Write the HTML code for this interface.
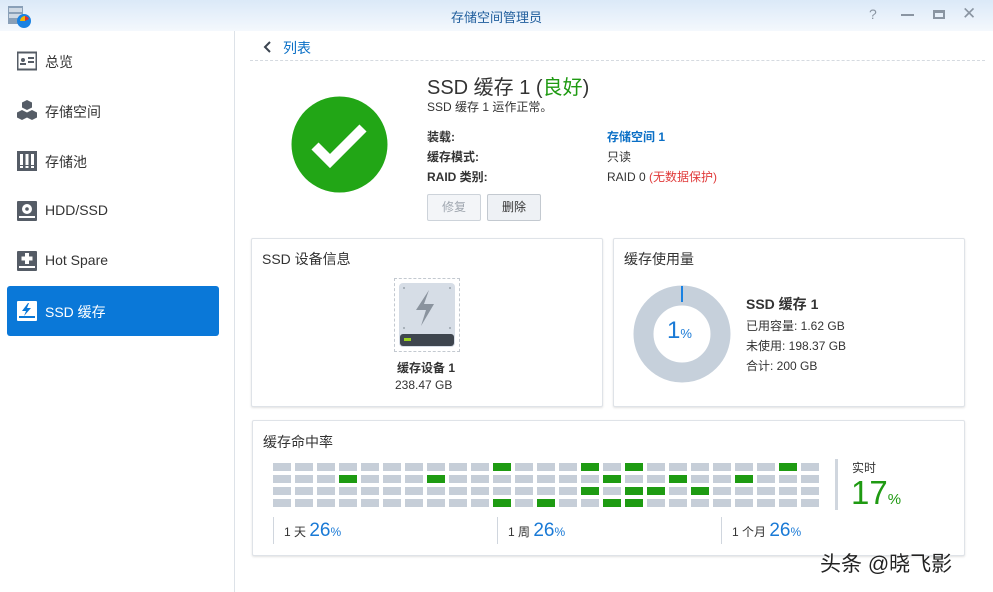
<!DOCTYPE html>
<html><head><meta charset="utf-8"><style>
*{margin:0;padding:0;box-sizing:border-box}
body{width:993px;height:592px;overflow:hidden;background:#fff;font-family:"Liberation Sans","Noto Sans CJK SC",sans-serif;color:#333;position:relative}
.a{position:absolute;white-space:nowrap}
.title{left:0;top:0;width:993px;height:31px;background:linear-gradient(#dbe9f8,#f4f8fd)}
.nav{left:16px;font-size:14px;color:#333}
.ico{position:absolute;left:17px;width:20px;height:20px}
.panel{position:absolute;background:#fff;border:1px solid #dfe3e8;box-shadow:0 1px 2px rgba(0,0,0,.12);border-radius:2px}
.cell{position:absolute;width:18px;height:8px;background:#c6ced8}
.g{background:#1e9b12}
.lbl{font-size:12px;font-weight:bold;color:#333}
</style></head><body>
<div class="a title"></div>
<svg class="a" style="left:7px;top:4px" width="24" height="24" viewBox="0 0 24 24"><rect x="1" y="2" width="15" height="18" fill="#8aa0b8"/><rect x="2" y="4" width="13" height="4" fill="#cfd9e4"/><rect x="2" y="10" width="13" height="4" fill="#cfd9e4"/><circle cx="17" cy="17" r="7" fill="#1a82e2"/><path d="M13 17a5 5 0 0 1 5-5v5z" fill="#f7b500"/><path d="M18 12a5 5 0 0 1 4 3l-4 2z" fill="#e0322b"/></svg>
<div class="a" style="left:0;width:993px;top:7px;text-align:center;font-size:13px;color:#1f5d9c">存储空间管理员</div>
<div class="a" style="left:869px;top:6px;font-size:14px;color:#8a95a2">?</div>
<div class="a" style="left:901px;top:14px;width:13px;height:2px;background:#8a95a2"></div>
<div class="a" style="left:933px;top:10px;width:12px;height:9px;border:2px solid #8a95a2;border-top-width:3px"></div>
<div class="a" style="left:962px;top:4px;font-size:17px;color:#8a95a2">✕</div>

<div class="a" style="left:234px;top:31px;width:1px;height:561px;background:#dde2e8"></div>
<svg class="ico" style="top:51px" viewBox="0 0 20 20"><rect x="0.5" y="1.5" width="19" height="17" fill="none" stroke="#555c66" stroke-width="2"/><circle cx="6" cy="9" r="2" fill="#555c66"/><rect x="3" y="12" width="6" height="2" fill="#555c66"/><rect x="11" y="6" width="6" height="2" fill="#555c66"/><rect x="11" y="10" width="6" height="2" fill="#555c66"/></svg>
<div class="a nav" style="left:45px;top:52px">总览</div>
<svg class="ico" style="top:100px" viewBox="0 0 20 20"><path d="M10 0l5 2.5v5l-5 2.5-5-2.5v-5z M5 10l5 2.5v5L5 20 0 17.5v-5z M15 10l5 2.5v5L15 20l-5-2.5v-5z" fill="#555c66"/></svg>
<div class="a nav" style="left:45px;top:102px">存储空间</div>
<svg class="ico" style="top:151px" viewBox="0 0 20 20"><rect x="0" y="0" width="20" height="20" fill="#555c66"/><rect x="3" y="3" width="3" height="11" fill="#fff"/><rect x="8.5" y="3" width="3" height="11" fill="#fff"/><rect x="14" y="3" width="3" height="11" fill="#fff"/><rect x="3" y="15" width="3" height="2" fill="#fff"/><rect x="8.5" y="15" width="3" height="2" fill="#fff"/><rect x="14" y="15" width="3" height="2" fill="#fff"/></svg>
<div class="a nav" style="left:45px;top:152px">存储池</div>
<svg class="ico" style="top:201px" viewBox="0 0 20 20"><rect width="20" height="20" rx="1" fill="#555c66"/><circle cx="10" cy="8" r="5" fill="#fff"/><circle cx="10" cy="8" r="1.8" fill="#555c66"/><rect x="2" y="15" width="16" height="2" fill="#fff"/></svg>
<div class="a nav" style="left:45px;top:202px">HDD/SSD</div>
<svg class="ico" style="top:251px" viewBox="0 0 20 20"><rect width="20" height="20" rx="1" fill="#555c66"/><rect x="8" y="2" width="4" height="11" fill="#fff"/><rect x="4.5" y="5.5" width="11" height="4" fill="#fff"/><rect x="2" y="15" width="16" height="2" fill="#fff"/></svg>
<div class="a nav" style="left:45px;top:252px">Hot Spare</div>
<div class="a" style="left:7px;top:286px;width:212px;height:50px;background:#0a78d8;border-radius:3px"></div>
<svg class="ico" style="top:301px" viewBox="0 0 20 20"><rect width="20" height="20" rx="1" fill="#fff"/><path d="M11 2L5 10h4l-2 5 7-8h-4l2-5z" fill="#0a78d8"/><rect x="2" y="15" width="16" height="2" fill="#0a78d8"/></svg>
<div class="a nav" style="left:45px;top:302px;color:#fff">SSD 缓存</div>

<svg class="a" style="left:262px;top:41px" width="10" height="12" viewBox="0 0 10 12"><path d="M8 1L3 6l5 5" fill="none" stroke="#3b4450" stroke-width="2"/></svg>
<div class="a" style="left:283px;top:38px;font-size:14px;color:#0a6fc6">列表</div>
<div class="a" style="left:250px;top:60px;width:735px;border-top:1px dashed #d5dae0"></div>

<svg class="a" style="left:291px;top:96px" width="97" height="97" viewBox="0 0 97 97"><circle cx="48.5" cy="48.5" r="48" fill="#22a616"/><path d="M24 50l15 15 33-33" fill="none" stroke="#fff" stroke-width="10"/></svg>
<div class="a" style="left:427px;top:71px;font-size:20px;color:#333">SSD 缓存 1 (<span style="color:#1f9a12">良好</span>)</div>
<div class="a" style="left:427px;top:98px;font-size:12px;color:#333">SSD 缓存 1 运作正常。</div>
<div class="a lbl" style="left:427px;top:128px">装载:</div>
<div class="a lbl" style="left:427px;top:148px">缓存模式:</div>
<div class="a lbl" style="left:427px;top:168px">RAID 类别:</div>
<div class="a" style="left:607px;top:128px;font-size:12px;font-weight:bold;color:#0a6fc6">存储空间 1</div>
<div class="a" style="left:607px;top:148px;font-size:12px">只读</div>
<div class="a" style="left:607px;top:168px;font-size:12px">RAID 0 <span style="color:#e03a3a">(无数据保护)</span></div>
<div class="a" style="left:427px;top:194px;width:54px;height:27px;border:1px solid #cdd3da;border-radius:2px;background:#f3f5f8;font-size:12px;color:#a0a7b0;text-align:center;line-height:25px">修复</div>
<div class="a" style="left:487px;top:194px;width:54px;height:27px;border:1px solid #c3c9d0;border-radius:2px;background:#eef1f5;font-size:12px;color:#333;text-align:center;line-height:25px">删除</div>

<div class="panel" style="left:251px;top:238px;width:352px;height:169px"></div>
<div class="a" style="left:262px;top:249px;font-size:14px">SSD 设备信息</div>
<div class="a" style="left:394px;top:278px;width:66px;height:74px;border:1px dashed #c3c9d0"></div>
<svg class="a" style="left:398px;top:282px" width="58" height="66" viewBox="0 0 58 66"><rect x="1" y="1" width="56" height="64" rx="4" fill="#d6dde6"/><circle cx="6" cy="6" r="1" fill="#9aa3ad"/><circle cx="52" cy="6" r="1" fill="#9aa3ad"/><circle cx="6" cy="46" r="1" fill="#9aa3ad"/><circle cx="52" cy="46" r="1" fill="#9aa3ad"/><path d="M31 8L18 28h10l-5 16 13-22H26z" fill="#8a939e"/><rect x="2" y="52" width="54" height="12" rx="3" fill="#3e454e"/><rect x="6" y="56" width="7" height="3" fill="#9ad21e"/></svg>
<div class="a" style="left:397px;top:359px;font-size:12px;font-weight:bold">缓存设备 1</div>
<div class="a" style="left:395px;top:378px;font-size:12px">238.47 GB</div>

<div class="panel" style="left:613px;top:238px;width:352px;height:169px"></div>
<div class="a" style="left:624px;top:249px;font-size:14px">缓存使用量</div>
<svg class="a" style="left:633px;top:285px" width="98" height="98" viewBox="0 0 98 98"><circle cx="49" cy="49" r="38.5" fill="none" stroke="#c6d0db" stroke-width="20"/><rect x="48" y="1" width="2" height="16" fill="#1a82e2"/></svg>
<div class="a" style="left:667px;top:317px;font-size:24px;color:#1a7ad6">1<span style="font-size:13px">%</span></div>
<div class="a" style="left:746px;top:294px;font-size:14px;font-weight:bold">SSD 缓存 1</div>
<div class="a" style="left:746px;top:317px;font-size:12px">已用容量: 1.62 GB</div>
<div class="a" style="left:746px;top:337px;font-size:12px">未使用: 198.37 GB</div>
<div class="a" style="left:746px;top:357px;font-size:12px">合计: 200 GB</div>

<div class="panel" style="left:252px;top:420px;width:713px;height:136px"></div>
<div class="a" style="left:263px;top:432px;font-size:14px">缓存命中率</div>
<div id="grid"></div>
<div class="a" style="left:835px;top:459px;width:3px;height:51px;background:#d0d6de"></div>
<div class="a" style="left:852px;top:459px;font-size:12px">实时</div>
<div class="a" style="left:851px;top:474px;font-size:33px;color:#1f9a12">17<span style="font-size:15px">%</span></div>
<div class="a" style="left:273px;top:517px;width:1px;height:27px;background:#d0d6de"></div>
<div class="a" style="left:497px;top:517px;width:1px;height:27px;background:#d0d6de"></div>
<div class="a" style="left:721px;top:517px;width:1px;height:27px;background:#d0d6de"></div>
<div class="a" style="left:284px;top:520px;font-size:12px;color:#333">1 天 <span style="font-size:19px;color:#1a7ad6">26</span><span style="font-size:12px;color:#1a7ad6">%</span></div>
<div class="a" style="left:508px;top:520px;font-size:12px;color:#333">1 周 <span style="font-size:19px;color:#1a7ad6">26</span><span style="font-size:12px;color:#1a7ad6">%</span></div>
<div class="a" style="left:732px;top:520px;font-size:12px;color:#333">1 个月 <span style="font-size:19px;color:#1a7ad6">26</span><span style="font-size:12px;color:#1a7ad6">%</span></div>

<div class="a" style="left:820px;top:548px;font-size:21px;color:#222;text-shadow:0 0 2px #fff">头条 @晓飞影</div>
<script>
var g=[[10,14,16,23],[3,7,15,18,21],[14,16,17,19],[10,12,15,16]],h='';
for(var r=0;r<4;r++)for(var c=0;c<25;c++){h+='<div class="cell'+(g[r].indexOf(c)>=0?' g':'')+'" style="left:'+(273+c*22)+'px;top:'+(463+r*12)+'px"></div>';}
document.getElementById('grid').innerHTML=h;
</script>
</body></html>
